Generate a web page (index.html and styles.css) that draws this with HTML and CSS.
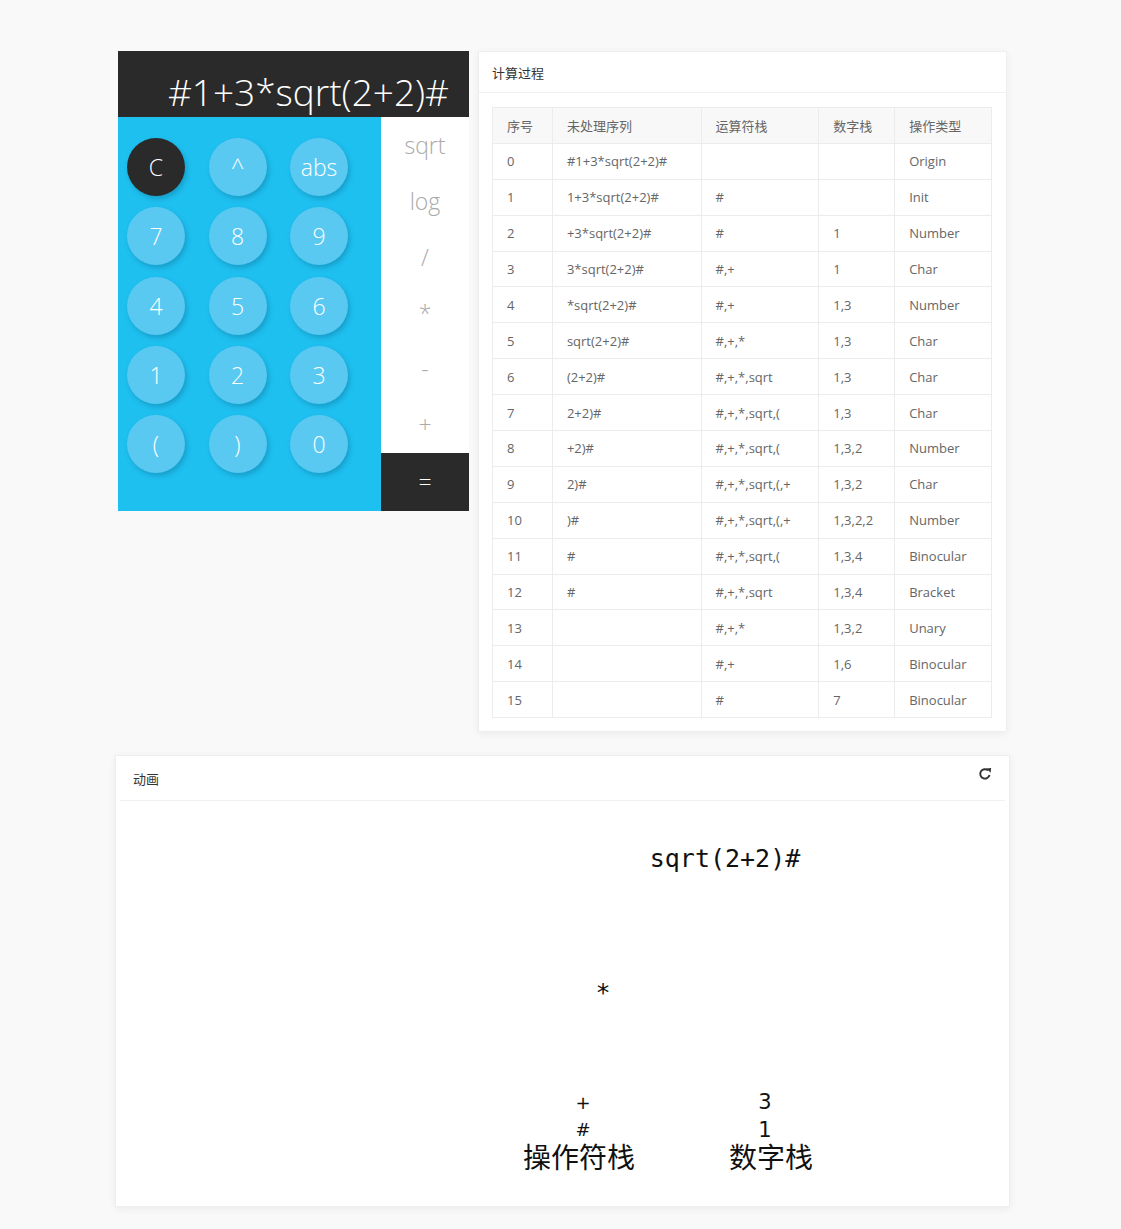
FILE: index.html
```html
<!DOCTYPE html>
<html>
<head>
<meta charset="utf-8">
<link rel="stylesheet" href="styles.css">
</head>
<body>
<div class="page">
  <div class="top-row">
    <div class="calc">
      <div class="display"><span>#1+3*sqrt(2+2)#</span></div>
      <div class="calc-body">
        <div class="keypad">
          <div class="key dark">C</div>
          <div class="key">^</div>
          <div class="key">abs</div>
          <div class="key">7</div>
          <div class="key">8</div>
          <div class="key">9</div>
          <div class="key">4</div>
          <div class="key">5</div>
          <div class="key">6</div>
          <div class="key">1</div>
          <div class="key">2</div>
          <div class="key">3</div>
          <div class="key">(</div>
          <div class="key">)</div>
          <div class="key">0</div>
        </div>
        <div class="ops">
          <div class="op">sqrt</div>
          <div class="op">log</div>
          <div class="op">/</div>
          <div class="op">*</div>
          <div class="op">-</div>
          <div class="op">+</div>
          <div class="op equals">=</div>
        </div>
      </div>
    </div>
    <div class="card table-card">
      <div class="card-head">计算过程</div>
      <div class="card-body">
        <table class="steps">
          <thead>
            <tr><th class="c1">序号</th><th class="c2">未处理序列</th><th class="c3">运算符栈</th><th class="c4">数字栈</th><th class="c5">操作类型</th></tr>
          </thead>
          <tbody>
            <tr><td>0</td><td>#1+3*sqrt(2+2)#</td><td></td><td></td><td>Origin</td></tr>
            <tr><td>1</td><td>1+3*sqrt(2+2)#</td><td>#</td><td></td><td>Init</td></tr>
            <tr><td>2</td><td>+3*sqrt(2+2)#</td><td>#</td><td>1</td><td>Number</td></tr>
            <tr><td>3</td><td>3*sqrt(2+2)#</td><td>#,+</td><td>1</td><td>Char</td></tr>
            <tr><td>4</td><td>*sqrt(2+2)#</td><td>#,+</td><td>1,3</td><td>Number</td></tr>
            <tr><td>5</td><td>sqrt(2+2)#</td><td>#,+,*</td><td>1,3</td><td>Char</td></tr>
            <tr><td>6</td><td>(2+2)#</td><td>#,+,*,sqrt</td><td>1,3</td><td>Char</td></tr>
            <tr><td>7</td><td>2+2)#</td><td>#,+,*,sqrt,(</td><td>1,3</td><td>Char</td></tr>
            <tr><td>8</td><td>+2)#</td><td>#,+,*,sqrt,(</td><td>1,3,2</td><td>Number</td></tr>
            <tr><td>9</td><td>2)#</td><td>#,+,*,sqrt,(,+</td><td>1,3,2</td><td>Char</td></tr>
            <tr><td>10</td><td>)#</td><td>#,+,*,sqrt,(,+</td><td>1,3,2,2</td><td>Number</td></tr>
            <tr><td>11</td><td>#</td><td>#,+,*,sqrt,(</td><td>1,3,4</td><td>Binocular</td></tr>
            <tr><td>12</td><td>#</td><td>#,+,*,sqrt</td><td>1,3,4</td><td>Bracket</td></tr>
            <tr><td>13</td><td></td><td>#,+,*</td><td>1,3,2</td><td>Unary</td></tr>
            <tr><td>14</td><td></td><td>#,+</td><td>1,6</td><td>Binocular</td></tr>
            <tr><td>15</td><td></td><td>#</td><td>7</td><td>Binocular</td></tr>
          </tbody>
        </table>
      </div>
    </div>
  </div>

  <div class="card anim-card">
    <div class="card-head anim-head">
      <span>动画</span>
      <svg class="refresh" width="14" height="14" viewBox="0 0 16 16">
        <path d="M13.2 9.2A5.4 5.4 0 1 1 11.6 3.9" fill="none" stroke="#333" stroke-width="2.2"/>
        <path d="M9.6 1.6 L15 1.2 L14.4 6.6 Z" fill="#333"/>
      </svg>
    </div>
    <svg class="stage" width="895" height="407" viewBox="0 0 895 407">
      <text class="mono" x="610" y="66" text-anchor="middle">sqrt(2+2)#</text>
      <text class="mono" x="488" y="200" text-anchor="middle">*</text>
      <text class="stk" x="468" y="308" text-anchor="middle">+</text>
      <text class="stk" x="468" y="335" text-anchor="middle">#</text>
      <text class="lbl" x="464" y="367" text-anchor="middle">操作符栈</text>
      <text class="stk num" x="650" y="308" text-anchor="middle">3</text>
      <text class="stk num" x="650" y="336" text-anchor="middle">1</text>
      <text class="lbl" x="656" y="367" text-anchor="middle">数字栈</text>
    </svg>
  </div>
</div>
</body>
</html>
```

FILE: styles.css
```css
html, body {
  margin: 0;
  padding: 0;
  background: #f9f9f9;
}
body {
  font-family: "Open Sans", "Noto Sans CJK SC", sans-serif;
}
.page {
  width: 895px;
  padding: 51px 0 22px 115px;
}
.top-row {
  display: flex;
  align-items: flex-start;
  gap: 9px;
  padding: 0 3px;
}

/* calculator */
.calc {
  width: 351px;
  flex: none;
}
.display {
  height: 66px;
  background: #2a2a2a;
  color: #fff;
  font-family: "Open Sans", sans-serif;
  font-weight: 300;
  font-size: 37px;
  line-height: 44px;
  display: flex;
  align-items: flex-end;
  justify-content: flex-end;
  padding: 0 20px 3px 0;
  box-sizing: border-box;
  white-space: nowrap;
}
.calc-body {
  display: flex;
  height: 394px;
}
.keypad {
  width: 263px;
  background: #1ec0f0;
  box-sizing: border-box;
  padding: 21px 0 0 9px;
  display: grid;
  grid-template-columns: repeat(3, 58px);
  grid-template-rows: repeat(5, 58px);
  column-gap: 23.5px;
  row-gap: 11.3px;
  align-content: start;
}
.key {
  width: 58px;
  height: 58px;
  border-radius: 50%;
  background: #5ac9f2;
  color: #fff;
  font-family: "Open Sans", sans-serif;
  font-weight: 300;
  font-size: 23px;
  display: flex;
  align-items: center;
  justify-content: center;
  box-shadow: 2px 3px 5px rgba(0, 60, 90, 0.25);
}
.key.dark {
  background: #2a2a2a;
}
.ops {
  width: 88px;
  background: #fff;
  display: flex;
  flex-direction: column;
}
.op {
  height: 56px;
  display: flex;
  align-items: center;
  justify-content: center;
  color: #aaa;
  font-family: "Open Sans", sans-serif;
  font-weight: 300;
  font-size: 23px;
}
.op.equals {
  height: 58px;
  margin-top: 1px;
  background: #2a2a2a;
  color: #fff;
}

/* cards */
.card {
  background: #fff;
  border: 1px solid #eeeeee;
  box-shadow: 0 2px 8px rgba(0, 0, 0, 0.06);
  box-sizing: border-box;
}
.table-card {
  width: 529px;
  flex: none;
}
.card-head {
  height: 41px;
  box-sizing: border-box;
  border-bottom: 1px solid #f0f0f0;
  padding: 0 13px;
  display: flex;
  align-items: center;
  font-family: "Noto Sans CJK SC", sans-serif;
  font-size: 13px;
  color: #333;
}
.table-card .card-body {
  padding: 14px 13px 13px 13px;
}
.steps {
  width: 500px;
  border-collapse: collapse;
  font-size: 13px;
  color: #666;
  font-family: "Open Sans", "Noto Sans CJK SC", sans-serif;
}
.steps tr {
  height: 35.9px;
}
.steps th, .steps td {
  border: 1px solid #ececec;
  padding: 0 14px;
  text-align: left;
  font-weight: normal;
  box-sizing: border-box;
  white-space: nowrap;
}
.steps th {
  background: #f8f8f8;
  font-family: "Noto Sans CJK SC", sans-serif;
}
.c1 { width: 60px; }
.c2 { width: 149px; }
.c3 { width: 118px; }
.c4 { width: 76px; }
.c5 { width: 97px; }

/* animation */
.anim-card {
  width: 895px;
  margin-top: 23px;
  height: 452px;
}
.anim-head {
  height: 45px;
  justify-content: space-between;
  border-bottom: 1px solid #f2f2f2;
  margin: 0 4px;
  padding-left: 13px;
  padding-right: 13px;
}
.refresh {
  margin-top: -8px;
}
.stage {
  display: block;
  margin-left: -1px;
}
.mono {
  font-family: "DejaVu Sans Mono", monospace;
  font-size: 25px;
  fill: #111;
}
.stk {
  font-family: "DejaVu Sans", sans-serif;
  font-size: 18px;
  fill: #111;
}
.stk.num {
  font-size: 21px;
}
.lbl {
  font-family: "Noto Sans CJK SC", sans-serif;
  font-size: 28px;
  fill: #111;
}
```
